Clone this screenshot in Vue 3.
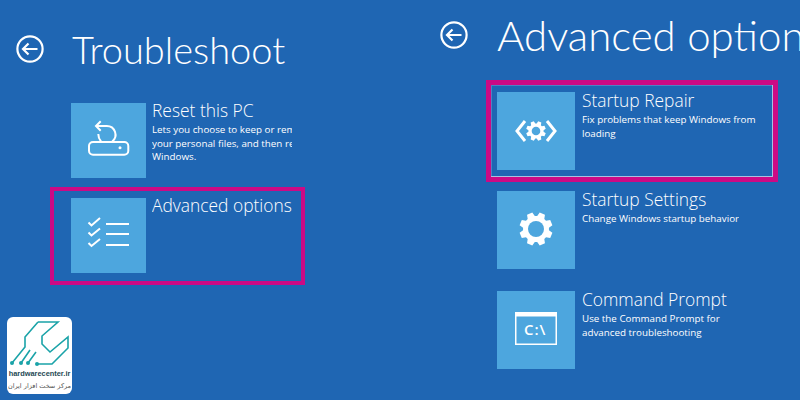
<script setup>
const leftRows = [
  {
    key: 'reset',
    title: 'Reset this PC',
    lines: ['Lets you choose to keep or remove', 'your personal files, and then reinstall', 'Windows.'],
    icon: 'reset'
  },
  { key: 'advanced', title: 'Advanced options', lines: [], icon: 'list', marked: true }
]

const rightRows = [
  {
    key: 'repair',
    title: 'Startup Repair',
    lines: ['Fix problems that keep Windows from', 'loading'],
    icon: 'repair',
    marked: true
  },
  { key: 'settings', title: 'Startup Settings', lines: ['Change Windows startup behavior'], icon: 'gear' },
  {
    key: 'prompt',
    title: 'Command Prompt',
    lines: ['Use the Command Prompt for', 'advanced troubleshooting'],
    icon: 'cmd'
  }
]

// eight tooth gear outline around cx, cy
function gearPath(cx, cy, outer, inner) {
  const pts = []
  for (let i = 0; i < 8; i++) {
    const a = (i * Math.PI) / 4 + Math.PI / 8
    for (const [off, r] of [[-0.3, inner], [-0.17, outer], [0.17, outer], [0.3, inner]]) {
      pts.push(`${(cx + Math.cos(a + off) * r).toFixed(2)} ${(cy + Math.sin(a + off) * r).toFixed(2)}`)
    }
  }
  return `M${pts.join('L')}Z`
}

const smallGear = gearPath(39, 39, 10, 7.6)
const bigGear = gearPath(39, 38, 16.8, 13)
</script>

<template>
  <div class="screen">
    <section class="panel panel--left">
      <header class="head">
        <svg class="back" viewBox="0 0 28 28" width="28" height="28">
          <circle cx="14" cy="14" r="12.6" />
          <path d="M21.5 14H7M12.5 8.500 7 14l5.500 5.500" />
        </svg>
        <h1>Troubleshoot</h1>
      </header>
      <div class="rows">
        <div v-for="row in leftRows" :key="row.key" class="row" :class="{ 'row--marked': row.marked }">
          <div class="tile">
            <svg v-if="row.icon === 'reset'" viewBox="0 0 75 75" width="75" height="75" class="ico">
              <path d="M29.700 18.300 25 23l4.700 4.700" />
              <path d="M25 23h10.700a8.700 8.700 0 0 1 5.500 15.500" />
              <path d="M27.300 31c0 3 1 5.500 2.700 7.500" />
              <rect x="18" y="39" width="39.300" height="12.700" rx="4" />
              <circle cx="49" cy="44.700" r="1.500" class="solid" />
            </svg>
            <svg v-else viewBox="0 0 75 75" width="75" height="75" class="ico">
              <path d="M17.500 24.500 20.500 27.500 29 20M17.500 34.500 20.500 37.500 29 30.500M17.500 45 20.500 48 29 41" />
              <path d="M35 26h23M35 36h23M35 47h23" />
            </svg>
          </div>
          <div class="copy">
            <h2>{{ row.title }}</h2>
            <p v-for="line in row.lines" :key="line" class="clip">{{ line }}</p>
          </div>
        </div>
      </div>
    </section>

    <section class="panel panel--right">
      <header class="head">
        <svg class="back" viewBox="0 0 28 28" width="28" height="28">
          <circle cx="14" cy="14" r="12.6" />
          <path d="M21.5 14H7M12.5 8.500 7 14l5.500 5.500" />
        </svg>
        <h1>Advanced options</h1>
      </header>
      <div class="rows">
        <div v-for="row in rightRows" :key="row.key" class="row" :class="{ 'row--marked': row.marked }">
          <div class="tile">
            <svg v-if="row.icon === 'repair'" viewBox="0 0 78 78" width="78" height="78" class="ico">
              <path d="M28 29 20 39l8 10M50 29l8 10-8 10" class="thick" />
              <path :d="smallGear" class="solid" />
              <circle cx="39" cy="39" r="4.300" class="hole" />
            </svg>
            <svg v-else-if="row.icon === 'gear'" viewBox="0 0 78 78" width="78" height="78" class="ico">
              <path :d="bigGear" class="solid" />
              <circle cx="39" cy="38" r="8" class="hole" />
            </svg>
            <svg v-else viewBox="0 0 78 78" width="78" height="78" class="ico">
              <rect x="18" y="21" width="42" height="33" class="solid" />
              <rect x="19.500" y="25.500" width="39" height="27" class="hole" />
              <path d="M49 23h2M53 23h2M57 23h2" class="tiny" />
              <text x="27" y="44" class="prompt">C:\</text>
            </svg>
          </div>
          <div class="copy">
            <h2>{{ row.title }}</h2>
            <p v-for="line in row.lines" :key="line">{{ line }}</p>
          </div>
        </div>
      </div>
    </section>

    <aside class="badge">
      <svg viewBox="0 0 65 52" width="65" height="52" class="wrench">
        <path d="M31 5H51L35 19V27L43 35 61 20V31L45 47H30" />
        <path d="M31 5 18 20V30L5 46" />
        <path d="M23 33 14 46M29 35 21 46" />
        <circle cx="5" cy="46" r="2" />
        <circle cx="14" cy="46" r="2" />
        <circle cx="21" cy="46" r="2" />
        <circle cx="30" cy="47" r="2" />
      </svg>
      <div class="brand">hardwarecenter.ir</div>
      <div class="brand-fa" dir="rtl">مرکز سخت افزار ایران</div>
    </aside>
  </div>
</template>

<style>
html,
body {
  margin: 0;
  background: #1f66b3;
}
</style>

<style scoped>
.screen {
  position: relative;
  display: flex;
  width: 800px;
  height: 400px;
  overflow: hidden;
  background: #1f66b3;
  color: #fff;
  font-family: "Open Sans", "Liberation Sans", sans-serif;
}

.panel--left {
  width: 430px;
  flex: none;
  padding: 24px 0 0 16px;
  box-sizing: border-box;
}

.panel--right {
  flex: 1;
  min-width: 0;
  padding: 10px 0 0 10px;
}

.head {
  display: flex;
  align-items: center;
  height: 50px;
}

.back {
  flex: none;
  fill: none;
  stroke: #fff;
  stroke-width: 2.2;
}

.head h1 {
  margin: 0;
  font-family: Lato, "Open Sans", sans-serif;
  font-size: 38px;
  font-weight: 300;
  line-height: 50px;
  white-space: nowrap;
}

.panel--left .head h1 {
  margin-left: 28px;
}

.panel--right .head h1 {
  margin-left: 29px;
  font-size: 42px;
}

.rows {
  display: flex;
  flex-direction: column;
}

.panel--left .rows {
  gap: 9px;
  margin: 29px 0 0 34px;
  width: 255px;
}

.panel--right .rows {
  margin: 20px 0 0 46px;
  width: 292px;
}

.panel--right .row + .row {
  margin-top: 22px;
}

.panel--right .row--marked + .row {
  margin-top: 9px;
}

.row {
  display: flex;
  box-sizing: border-box;
  padding-left: 21px;
}

.panel--right .row {
  padding-left: 11px;
}

.row--marked {
  border: 4px solid #cc0a85;
  padding: 7px 0 8px 17px;
}

.panel--right .row--marked {
  border-width: 5px;
  padding: 7px 0 7px 6px;
  box-shadow: inset -1px -1px 0 #a9bfe0, inset 1px 1px 0 #4f82c4;
}

.tile {
  flex: none;
  width: 75px;
  height: 75px;
  background: #4da6de;
}

.panel--right .tile {
  width: 78px;
  height: 78px;
}

.ico {
  display: block;
  fill: none;
  stroke: #fff;
  stroke-width: 2;
}

.solid {
  fill: #fff;
  stroke: none;
}

.ico .hole {
  fill: #4da6de;
  stroke: none;
}

.thick {
  stroke-width: 3;
}

.tiny {
  stroke-width: 1;
}

.prompt {
  fill: #fff;
  stroke: none;
  font-family: "Open Sans", sans-serif;
  font-size: 15px;
  font-weight: 600;
  letter-spacing: 1px;
}

.copy {
  margin-left: 7px;
  min-width: 0;
  overflow: hidden;
}

.panel--left .copy {
  margin-left: 6px;
}

.copy h2 {
  margin: 0 0 5px;
  font-size: 17.400px;
  font-weight: 300;
  line-height: 16px;
  white-space: nowrap;
}

.copy p {
  margin: 0;
  font-size: 9.800px;
  line-height: 14px;
  white-space: nowrap;
}

.panel--left .copy h2 {
  line-height: 15px;
}

.panel--left .copy p {
  line-height: 13.500px;
}

.clip {
  width: 140px;
  overflow: hidden;
}

.badge {
  position: absolute;
  left: 7px;
  top: 317px;
  width: 65px;
  height: 77px;
  border-radius: 6px;
  background: #fff;
  text-align: center;
}

.wrench {
  display: block;
  fill: none;
  stroke: #1aa3a8;
  stroke-width: 1.600;
}

.wrench circle {
  fill: #1aa3a8;
  stroke: none;
}

.brand {
  color: #1f4a55;
  font-family: "Liberation Sans", sans-serif;
  font-size: 7.400px;
  font-weight: 700;
  line-height: 10px;
  white-space: nowrap;
}

.brand-fa {
  margin-top: 2px;
  color: #555;
  font-family: "DejaVu Sans", sans-serif;
  font-size: 6.500px;
  line-height: 11px;
  white-space: nowrap;
}
</style>
